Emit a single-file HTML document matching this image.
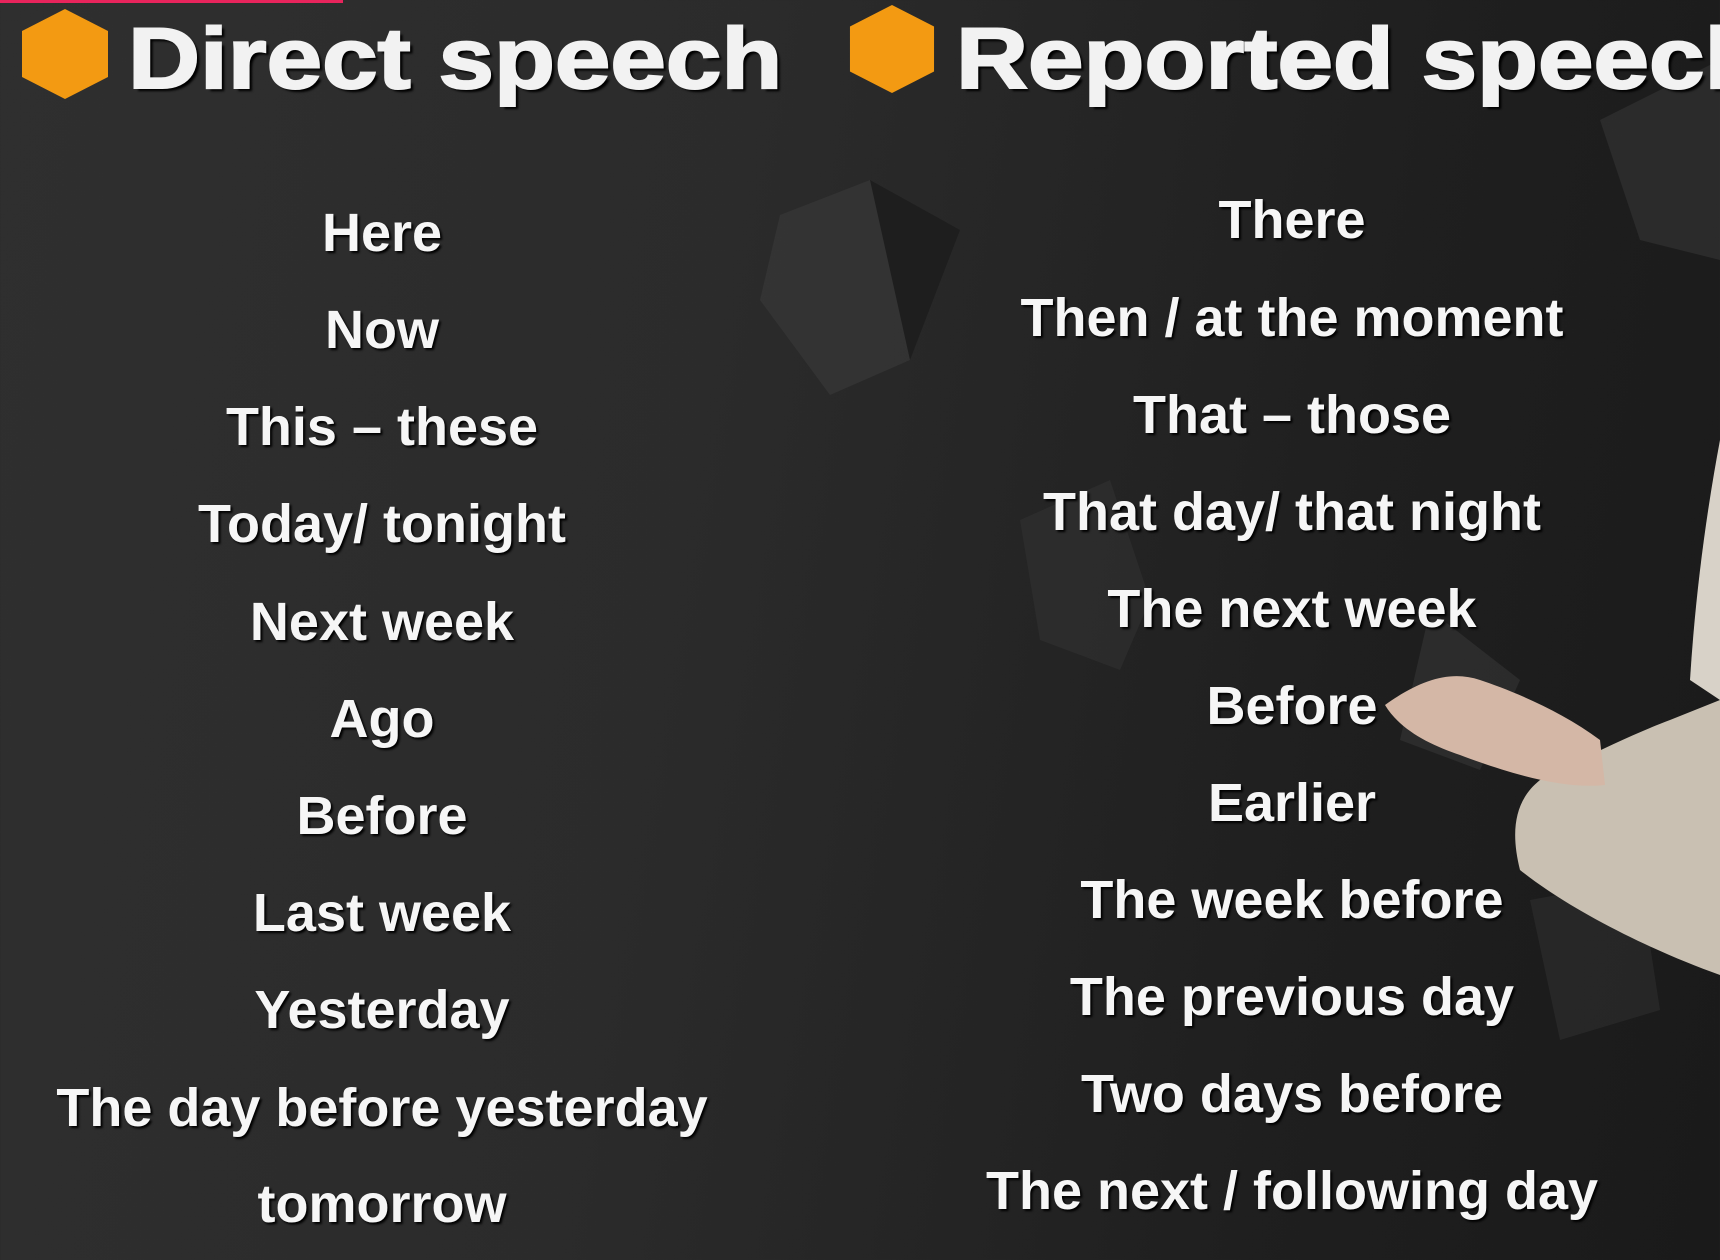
<!DOCTYPE html>
<html><head><meta charset="utf-8"><style>
html,body{margin:0;padding:0}
body{width:1720px;height:1260px;overflow:hidden;position:relative;font-family:"Liberation Sans",Arial,sans-serif;
background:linear-gradient(100deg,#2f2f2f 0%,#2b2b2b 40%,#1f1f1f 75%,#1a1a1a 100%);}
.h{position:absolute;top:12px;font-size:86px;line-height:94px;font-weight:bold;color:#f2f2f2;white-space:nowrap;text-shadow:3px 3px 2px #000;transform:scaleX(1.16);transform-origin:0 0;-webkit-text-stroke:2px #f2f2f2;}
.l{position:absolute;width:800px;text-align:center;font-size:54px;line-height:60px;font-weight:bold;color:#f6f6f6;white-space:nowrap;text-shadow:2px 2px 2px #000;}
.L{left:-18px}.R{left:892px}
</style></head><body>
<div style="position:absolute;left:0;top:0;width:343px;height:3px;background:#e8245c"></div>
<svg width="1720" height="1260" style="position:absolute;left:0;top:0">
<polygon points="780,215 870,180 960,230 910,360 830,395 760,300" fill="#3a3a3a" opacity="0.6"/>
<polygon points="870,180 960,230 910,360" fill="#151515" opacity="0.7"/>
<polygon points="1020,520 1110,480 1150,600 1120,670 1040,640" fill="#333" opacity="0.5"/>
<polygon points="1600,120 1720,60 1720,260 1640,240" fill="#3a3a3a" opacity="0.5"/>
<polygon points="1430,610 1520,680 1480,770 1400,740" fill="#393939" opacity="0.5"/>
<polygon points="1530,900 1640,880 1660,1010 1560,1040" fill="#2e2e2e" opacity="0.6"/>
<!-- body -->
<path d="M1720,440 C1705,520 1695,600 1690,680 L1720,700 Z" fill="#d8d2c8"/>
<!-- sleeve -->
<path d="M1720,700 L1670,720 C1630,735 1580,760 1540,780 C1515,800 1510,830 1520,870 C1570,910 1650,950 1720,975 Z" fill="#c9c0b2"/>
<!-- hand -->
<path d="M1385,705 C1420,680 1450,670 1480,680 C1510,690 1560,710 1600,740 L1605,785 C1560,790 1500,770 1460,755 C1430,745 1400,730 1385,705 Z" fill="#d4b7a6"/>
</svg>
<svg style="position:absolute;left:20px;top:9px" width="90" height="90" viewBox="0 0 90 90"><polygon points="45,0 88,22 88,68 45,90 2,68 2,22" fill="#f39a12"/></svg>
<div class="h" style="left:128px">Direct speech</div>
<svg style="position:absolute;left:848px;top:5px" width="88" height="88" viewBox="0 0 90 90"><polygon points="45,0 88,22 88,68 45,90 2,68 2,22" fill="#f39a12"/></svg>
<div class="h" style="left:956px">Reported speech</div>

<div class="l L" style="top:203px">Here</div>
<div class="l L" style="top:300px">Now</div>
<div class="l L" style="top:397px">This – these</div>
<div class="l L" style="top:494px">Today/ tonight</div>
<div class="l L" style="top:592px">Next week</div>
<div class="l L" style="top:689px">Ago</div>
<div class="l L" style="top:786px">Before</div>
<div class="l L" style="top:883px">Last week</div>
<div class="l L" style="top:980px">Yesterday</div>
<div class="l L" style="top:1078px">The day before yesterday</div>
<div class="l L" style="top:1174px">tomorrow</div>

<div class="l R" style="top:190px">There</div>
<div class="l R" style="top:288px">Then / at the moment</div>
<div class="l R" style="top:385px">That – those</div>
<div class="l R" style="top:482px">That day/ that night</div>
<div class="l R" style="top:579px">The next week</div>
<div class="l R" style="top:676px">Before</div>
<div class="l R" style="top:773px">Earlier</div>
<div class="l R" style="top:870px">The week before</div>
<div class="l R" style="top:967px">The previous day</div>
<div class="l R" style="top:1064px">Two days before</div>
<div class="l R" style="top:1161px">The next / following day</div>
</body></html>
